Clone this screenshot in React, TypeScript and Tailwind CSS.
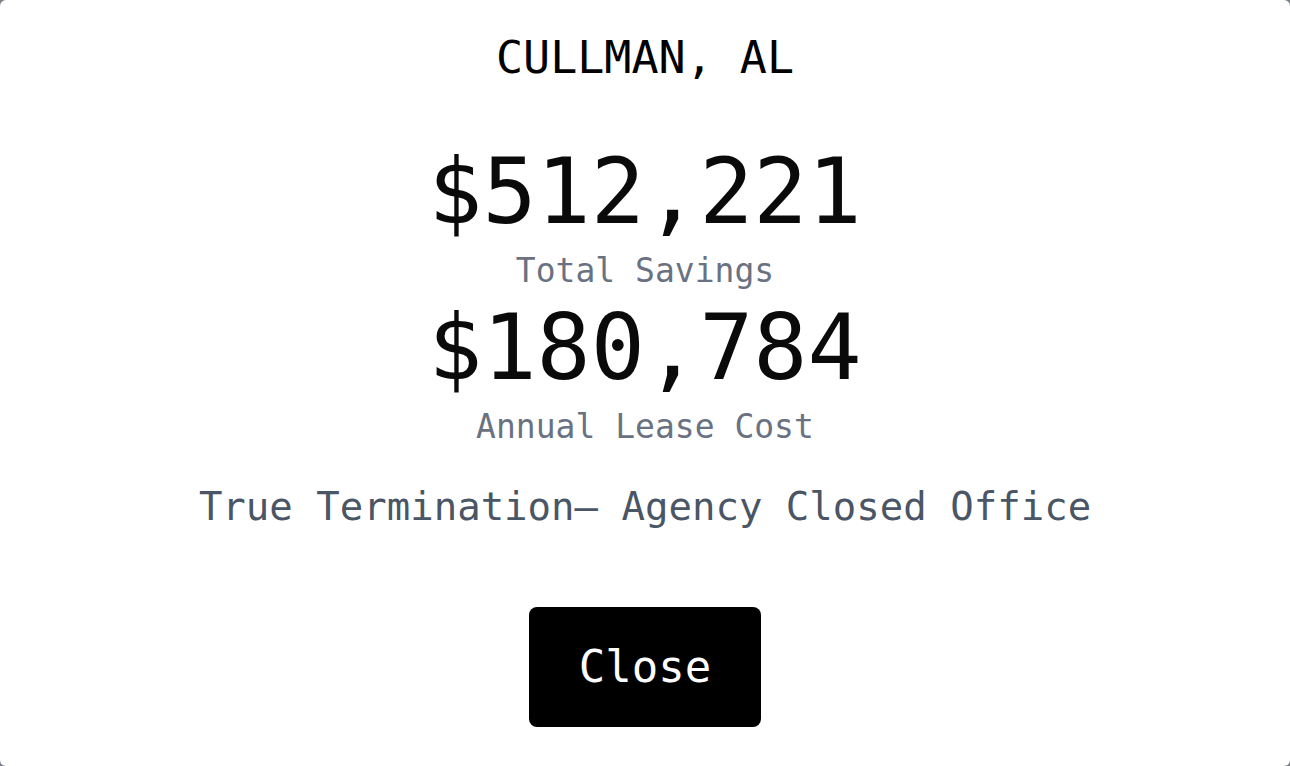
export default function App() {
  return (
    <div className="min-h-screen bg-[#7b7f87] font-['DejaVu_Sans_Mono',monospace]">
      <div className="flex h-[766px] w-full flex-col items-center rounded-md bg-white text-center">
        <h2 className="mt-[35px] text-[45px] leading-none text-black">CULLMAN, AL</h2>

        <div className="mt-[67px] text-[90px] leading-none text-[#0a0a0a]">$512,221</div>
        <div className="mt-[17px] text-[33px] leading-none text-gray-500">Total Savings</div>

        <div className="mt-[16px] text-[90px] leading-none text-[#0a0a0a]">$180,784</div>
        <div className="mt-[17px] text-[33px] leading-none text-gray-500">Annual Lease Cost</div>

        <p className="mt-[44px] text-[39px] leading-none text-gray-600">
          True Termination— Agency Closed Office
        </p>

        <button className="mt-[81px] flex h-[120px] w-[232px] items-center justify-center rounded-lg bg-black text-[44px] leading-none text-white">
          Close
        </button>
      </div>
    </div>
  );
}
